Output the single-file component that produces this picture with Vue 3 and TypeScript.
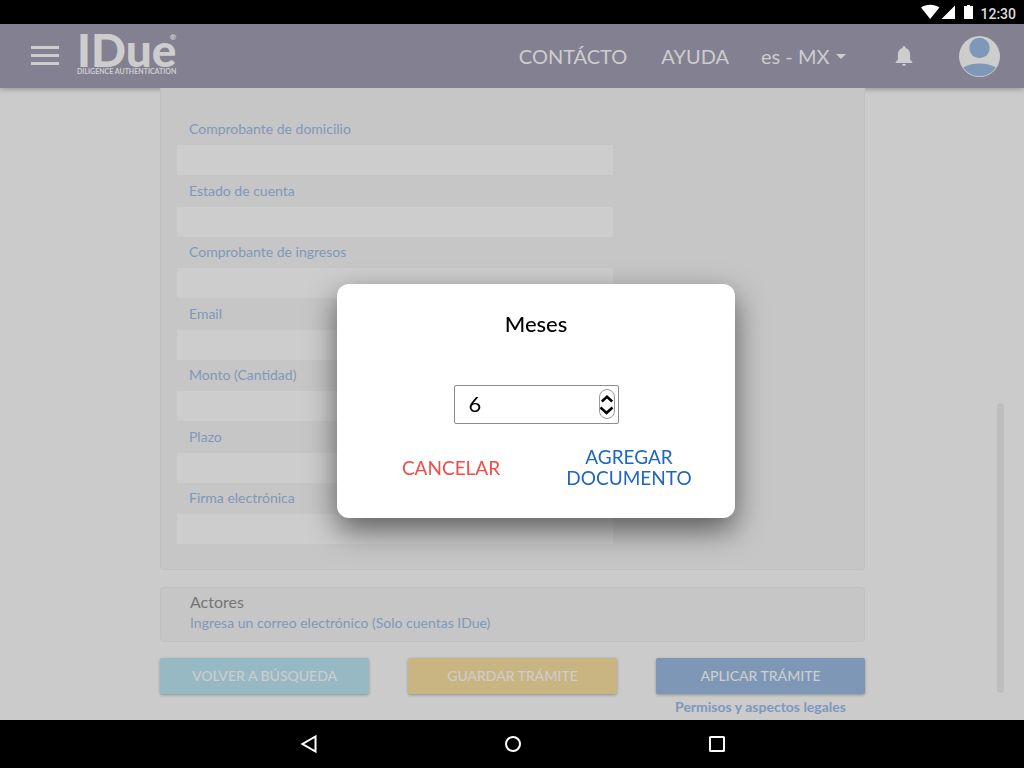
<script setup lang="ts">
import { ref } from 'vue'

interface Field {
  id: string
  label: string
  value: string
}

const fields = ref<Field[]>([
  { id: 'domicilio', label: 'Comprobante de domicilio', value: '' },
  { id: 'cuenta', label: 'Estado de cuenta', value: '' },
  { id: 'ingresos', label: 'Comprobante de ingresos', value: '' },
  { id: 'email', label: 'Email', value: '' },
  { id: 'monto', label: 'Monto (Cantidad)', value: '' },
  { id: 'plazo', label: 'Plazo', value: '' },
  { id: 'firma', label: 'Firma electrónica', value: '' },
])

const language = ref('es - MX')
const months = ref(6)
const open = ref(true)

function step(delta: number) {
  months.value = Math.max(1, months.value + delta)
}
</script>

<template>
  <div class="screen">
    <div class="status-bar">
      <svg class="status-icons" width="54" height="16" viewBox="0 0 54 16" aria-hidden="true">
        <path d="M0 3.6C5-.2 13.4-.2 18.400 3.600L9.200 15Z" />
        <path d="M20.500 15 34 1.500V15Z" />
        <path d="M43 2h3V1h3v1h3v13h-9Z" />
      </svg>
      <span class="clock">12:30</span>
    </div>

    <header class="app-bar">
      <button class="icon-button menu" type="button" aria-label="Menú">
        <svg width="28" height="20" viewBox="0 0 28 20"><path d="M0 0h28v3H0zM0 8h28v3H0zM0 16h28v3H0z" /></svg>
      </button>
      <a class="logo" href="#">
        <span class="logo-name">IDue</span>
        <span class="logo-mark">®</span>
        <span class="logo-tag">DILIGENCE AUTHENTICATION</span>
      </a>
      <nav class="links">
        <a class="contact" href="#">CONTÁCTO</a>
        <a class="help" href="#">AYUDA</a>
        <div class="language">
          <select v-model="language" aria-label="Idioma">
            <option>es - MX</option>
            <option>en - US</option>
          </select>
          <svg width="10" height="5" viewBox="0 0 10 5" aria-hidden="true"><path d="M0 0h10L5 5Z" /></svg>
        </div>
        <button class="icon-button bell" type="button" aria-label="Notificaciones">
          <svg width="18" height="20" viewBox="0 0 18 20">
            <path d="M9 0C8.200 0 7.600.6 7.600 1.300v.8C4.700 2.800 2.900 5.300 2.900 8.300v5.500L.6 16v1h16.800v-1l-2.300-2.200V8.300c0-3-1.800-5.500-4.700-6.200v-.8C10.400.6 9.800 0 9 0ZM7 18c0 1.100.9 1.900 2 1.900s2-.8 2-1.900Z" />
          </svg>
        </button>
        <button class="icon-button avatar" type="button" aria-label="Perfil">
          <svg width="41" height="41" viewBox="0 0 41 41">
            <circle cx="20.500" cy="20.500" r="20.500" />
            <circle class="person" cx="20.500" cy="12" r="10.200" />
            <path class="person" d="M4.200 31.500C13 26 28 26 36.800 31.500 33 37.200 27 40.200 20.500 40.200S8 37.200 4.200 31.500Z" />
          </svg>
        </button>
      </nav>
    </header>

    <main class="content">
      <form class="panel documents" @submit.prevent>
        <div v-for="field in fields" :key="field.id" class="field">
          <label :for="field.id">{{ field.label }}</label>
          <input :id="field.id" v-model="field.value" type="text" />
        </div>
      </form>

      <section class="panel actors">
        <h2>Actores</h2>
        <p>Ingresa un correo electrónico (Solo cuentas IDue)</p>
      </section>

      <div class="actions">
        <button class="action back" type="button">VOLVER A BÚSQUEDA</button>
        <button class="action save" type="button">GUARDAR TRÁMITE</button>
        <button class="action apply" type="button">APLICAR TRÁMITE</button>
        <a class="legal" href="#">Permisos y aspectos legales</a>
      </div>
      <div class="scroll-thumb"></div>
    </main>

    <div class="system-nav">
      <button class="icon-button" type="button" aria-label="Atrás">
        <svg width="18" height="18" viewBox="0 0 18 18"><path d="M15.500 1.500v15L2.500 9Z" /></svg>
      </button>
      <button class="icon-button" type="button" aria-label="Inicio">
        <svg width="18" height="18" viewBox="0 0 18 18"><circle cx="9" cy="9" r="7" /></svg>
      </button>
      <button class="icon-button" type="button" aria-label="Recientes">
        <svg width="18" height="18" viewBox="0 0 18 18"><rect x="2" y="2" width="14" height="14" rx=".5" /></svg>
      </button>
    </div>

    <div v-if="open" class="overlay">
      <div class="dialog" role="dialog" aria-modal="true" aria-labelledby="dialog-title">
        <h1 id="dialog-title"><label for="months">Meses</label></h1>
        <div class="stepper">
          <input id="months" v-model.number="months" type="number" min="1" />
          <div class="spinner">
            <button type="button" aria-label="Aumentar" @click="step(1)">
              <svg width="14" height="9" viewBox="0 0 14 9"><path d="M1.800 7.500 7 2.800l5.200 4.700" /></svg>
            </button>
            <button type="button" aria-label="Disminuir" @click="step(-1)">
              <svg width="14" height="9" viewBox="0 0 14 9"><path d="M.5 1.500 6.500 7 12.500 1.500" /></svg>
            </button>
          </div>
        </div>
        <div class="dialog-actions">
          <button class="cancel" type="button" @click="open = false">CANCELAR</button>
          <button class="add" type="button" @click="open = false">AGREGAR DOCUMENTO</button>
        </div>
      </div>
    </div>
  </div>
</template>

<style>
body {
  margin: 0;
  background: #cbcbcb;
}
</style>

<style scoped>
.screen {
  display: flex;
  flex-direction: column;
  min-height: 100vh;
  background: #cbcbcb;
  font-family: Lato, "Liberation Sans", sans-serif;
}

.screen *,
.screen *::before {
  box-sizing: border-box;
}

button,
input,
select {
  margin: 0;
  padding: 0;
  border: 0;
  background: none;
  color: inherit;
  font: inherit;
}

a {
  color: inherit;
  text-decoration: none;
}

svg {
  display: block;
  fill: currentColor;
}

.icon-button {
  display: flex;
  align-items: center;
  justify-content: center;
}

.status-bar {
  display: flex;
  align-items: center;
  justify-content: flex-end;
  gap: 5px;
  height: 24px;
  padding: 0 8px;
  background: #000;
  color: #fff;
}

.clock {
  padding-top: 4px;
  color: #ddd;
  font: 500 14px/20px Roboto, sans-serif;
}

.app-bar {
  position: relative;
  display: flex;
  align-items: center;
  height: 64px;
  padding: 0 24px 0 31px;
  background: #838092;
  color: #cdcdcd;
  box-shadow: 0 1px 5px rgba(0, 0, 0, 0.3);
}

.logo {
  position: relative;
  display: flex;
  flex-direction: column;
  margin: 0 0 4px 18px;
}

.logo-name {
  font-size: 46px;
  font-weight: 900;
  line-height: 34px;
}

.logo-mark {
  position: absolute;
  top: 0;
  right: 0;
  font-size: 8px;
  font-weight: 900;
  line-height: 8px;
}

.logo-tag {
  font-size: 7px;
  font-weight: 700;
  line-height: 8px;
}

.links {
  display: flex;
  align-items: center;
  margin-left: auto;
  font-size: 20px;
  line-height: 24px;
  white-space: nowrap;
}

.contact {
  margin-right: 34px;
}

.help {
  margin-right: 32px;
}

.language {
  display: flex;
  align-items: center;
  gap: 6px;
  margin-right: 49px;
}

.language select {
  width: 69px;
  appearance: none;
}

.bell {
  margin-right: 46px;
}

.person {
  fill: #7f98b7;
}

.content {
  position: relative;
  display: flex;
  flex: 1;
  flex-direction: column;
  padding: 0 159px 4px 160px;
}

.panel {
  border: 1px solid #c0c0c0;
  border-radius: 4px;
  background: #c6c6c6;
}

.documents {
  display: flex;
  flex: 1;
  flex-direction: column;
  justify-content: space-between;
  padding: 27px 16px 25px;
  border-top: 0;
  border-radius: 0 0 4px 4px;
}

.field {
  display: flex;
  flex-direction: column;
  gap: 2px;
  width: 65%;
}

.field label {
  padding-left: 12px;
  color: #7e98bb;
  font-size: 14px;
  line-height: 28px;
}

.field input {
  height: 30px;
  padding: 0 12px;
  background: #cdcdcd;
}

.actors {
  margin: 17px 0 16px;
  padding: 3px 29px 8px;
}

.actors h2 {
  margin: 0;
  color: #757575;
  font-size: 16px;
  font-weight: 400;
  line-height: 22px;
}

.actors p {
  margin: 0;
  color: #7e98bb;
  font-size: 14px;
  line-height: 20px;
}

.actions {
  display: grid;
  grid-template-columns: repeat(3, 1fr);
  column-gap: 39px;
  row-gap: 4px;
}

.action {
  height: 36px;
  border-radius: 2px;
  color: #cdcdcd;
  font-size: 14px;
  font-weight: 500;
  line-height: 20px;
  box-shadow: 0 1px 3px rgba(0, 0, 0, 0.3);
}

.back {
  background: #97b9c4;
}

.save {
  background: #c9b582;
}

.apply {
  background: #7f97b6;
}

.legal {
  grid-column: 3;
  color: #7e98bb;
  font-size: 14px;
  font-weight: 700;
  line-height: 18px;
  text-align: center;
}

.scroll-thumb {
  position: absolute;
  right: 20px;
  bottom: 27px;
  width: 7px;
  height: 290px;
  border-radius: 4px;
  background: #bebebe;
}

.system-nav {
  display: flex;
  align-items: center;
  justify-content: center;
  gap: 186px;
  height: 48px;
  padding-left: 2px;
  background: #000;
  color: #fff;
}

.system-nav svg {
  fill: none;
  stroke: currentColor;
  stroke-width: 2;
}

.overlay {
  position: fixed;
  inset: 0;
  display: flex;
  align-items: center;
  justify-content: center;
  padding: 34px 0 0 48px;
}

.dialog {
  display: flex;
  flex-direction: column;
  align-items: center;
  width: 398px;
  max-width: 100%;
  padding: 25px 32px 30px;
  border-radius: 12px;
  background: #fff;
  color: #000;
  box-shadow: 0 12px 30px rgba(0, 0, 0, 0.55);
}

.dialog h1 {
  margin: 0 0 46px;
  font-size: 22px;
  font-weight: 500;
  line-height: 30px;
}

.stepper {
  display: flex;
  align-items: center;
  width: 165px;
  height: 39px;
  padding: 0 3px 1px 14px;
  border: 1px solid #8c8c8c;
  border-radius: 2px;
}

.stepper input {
  flex: 1;
  min-width: 0;
  font-size: 22px;
  line-height: 30px;
  appearance: textfield;
}

.stepper input::-webkit-inner-spin-button {
  appearance: none;
}

.spinner {
  display: flex;
  flex-direction: column;
  align-items: center;
  justify-content: center;
  gap: 3px;
  width: 16px;
  height: 30px;
  border: 1px solid #999;
  border-radius: 8px;
}

.spinner svg {
  fill: none;
  stroke: currentColor;
  stroke-width: 2.5;
}

.dialog-actions {
  display: grid;
  grid-template-columns: 1fr 1fr;
  align-items: center;
  align-self: stretch;
  column-gap: 30px;
  margin-top: 22px;
  padding-left: 8px;
  font-size: 19px;
  line-height: 21px;
}

.cancel {
  color: #f44b47;
}

.add {
  color: #1f66c0;
}
</style>
